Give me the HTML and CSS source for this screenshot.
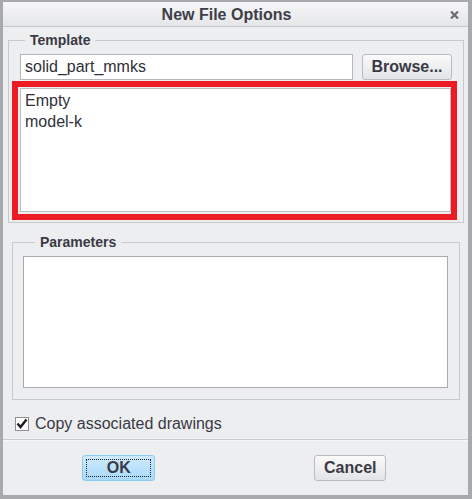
FILE: index.html
```html
<!DOCTYPE html>
<html>
<head>
<meta charset="utf-8">
<title>New File Options</title>
<link rel="stylesheet" href="styles.css">
</head>
<body>
<div class="window">
  <div class="titlebar">
    <div class="title">New File Options</div>
    <div class="close">
      <svg width="9" height="8" viewBox="0 0 9 8"><path d="M1 0.5 L8 7.5 M8 0.5 L1 7.5" stroke="#6a6c70" stroke-width="2.2" fill="none"/></svg>
    </div>
  </div>

  <fieldset class="group group-template">
    <legend>Template</legend>
    <div class="template-row">
      <input class="textfield" type="text" value="solid_part_mmks">
      <button class="btn btn-browse">Browse...</button>
    </div>
    <div class="highlight">
      <div class="listbox">
        <div class="list-item">Empty</div>
        <div class="list-item">model-k</div>
      </div>
    </div>
  </fieldset>

  <fieldset class="group group-params">
    <legend>Parameters</legend>
    <div class="params-box"></div>
  </fieldset>

  <label class="check-row">
    <span class="checkbox">
      <svg width="14" height="14" viewBox="0 0 14 14"><path d="M2.5 6.5 L5.5 10 L11.5 2.5" stroke="#1e1e22" stroke-width="2.4" fill="none"/></svg>
    </span>
    <span class="check-label">Copy associated drawings</span>
  </label>

  <div class="separator"></div>

  <div class="actions">
    <button class="btn btn-dialog btn-default"><span>OK</span></button>
    <button class="btn btn-dialog btn-cancel">Cancel</button>
  </div>
</div>
</body>
</html>
```

FILE: styles.css
```css
html, body {
  margin: 0;
  padding: 0;
}

body {
  width: 472px;
  height: 499px;
  font-family: "Liberation Sans", Arial, sans-serif;
  color: #393a44;
}

.window {
  box-sizing: border-box;
  width: 472px;
  height: 499px;
  background: #edeef0;
  border-style: solid;
  border-color: #a7a9ac;
  border-width: 2px 4px 4px 3px;
  display: flex;
  flex-direction: column;
}

.titlebar {
  height: 25px;
  box-sizing: border-box;
  display: flex;
  align-items: center;
  background: linear-gradient(#f6f6f7, #e5e6e8);
  border-bottom: 1px solid #c6c7ca;
}

.title {
  flex: 1;
  text-align: center;
  font-weight: bold;
  font-size: 16px;
  color: #3d3e48;
  padding-top: 1px;
}

.close {
  width: 18px;
  display: flex;
  align-items: center;
  padding-top: 1px;
}

.group {
  margin: 0;
  padding: 0;
  border: 1px solid #c8c9cc;
  min-width: 0;
}

.group legend {
  font-weight: bold;
  font-size: 14px;
  line-height: 16px;
  padding: 0 5px;
  color: #393a44;
}

.group-template {
  margin: 5px 4px 0 5px;
  padding: 6px 6px 2px 3px;
}

.group-template legend {
  margin-left: 13px;
}

.template-row {
  display: flex;
  margin-left: 8px;
  gap: 9px;
}

.textfield {
  box-sizing: border-box;
  width: 333px;
  height: 26px;
  margin: 0;
  border: 1px solid #b4b6b9;
  background: #fff;
  font-family: inherit;
  font-size: 16px;
  color: #2f3038;
  padding: 0 4px;
  outline: none;
}

.btn {
  box-sizing: border-box;
  margin: 0;
  font-family: inherit;
  font-weight: bold;
  font-size: 16px;
  color: #393a44;
  border: 1px solid #b9bbbe;
  border-radius: 3px;
  background: linear-gradient(#fafafa, #e3e4e6);
  padding: 0;
}

.btn-browse {
  width: 90px;
  height: 26px;
}

.highlight {
  margin-top: 1px;
  border: 6px solid #ed1c24;
  padding: 1px 0 2px 2px;
}

.listbox {
  box-sizing: border-box;
  height: 124px;
  background: #fff;
  border: 1px solid #b9bbbe;
  padding: 1px 4px;
}

.list-item {
  font-size: 16px;
  line-height: 21px;
  color: #2f3038;
}

.group-params {
  margin: 11px 8px 0 9px;
  padding: 6px 11px 11px 10px;
}

.group-params legend {
  margin-left: 12px;
}

.params-box {
  height: 132px;
  background: #fff;
  border: 1px solid #a9abae;
  box-sizing: border-box;
}

.check-row {
  display: flex;
  align-items: center;
  gap: 6px;
  margin: 14px 0 0 12px;
  height: 20px;
}

.checkbox {
  box-sizing: border-box;
  width: 14px;
  height: 14px;
  border: 1px solid #8e9093;
  background: #fff;
  display: flex;
  align-items: center;
  justify-content: center;
}

.checkbox svg {
  flex: none;
}

.check-label {
  font-size: 16px;
  color: #393a44;
}

.separator {
  margin-top: 5px;
  height: 1px;
  background: #cbccce;
  border-bottom: 1px solid #f7f7f8;
}

.actions {
  display: grid;
  grid-template-columns: 1fr 1fr;
  justify-items: center;
  margin-top: 14px;
  padding-right: 2px;
}

.btn-dialog {
  width: 73px;
  height: 26px;
}

.btn-cancel {
  width: 72px;
}

.btn-default {
  border-color: #8ccbf2;
  background: linear-gradient(#cfeafd, #a8d9fb);
  padding: 3px;
}

.btn-default span {
  display: flex;
  align-items: center;
  justify-content: center;
  height: 100%;
  box-sizing: border-box;
  border: 1px dotted #222;
}
```
